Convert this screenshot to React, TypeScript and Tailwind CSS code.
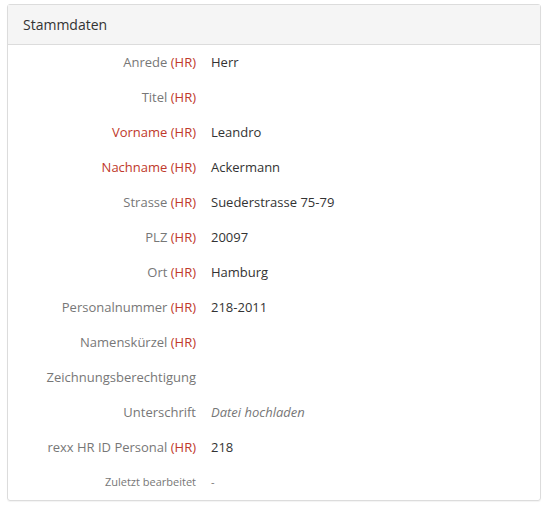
const rows: { label: string; hr?: boolean; red?: boolean; value?: string; italic?: boolean }[] = [
  { label: 'Anrede', hr: true, value: 'Herr' },
  { label: 'Titel', hr: true },
  { label: 'Vorname', hr: true, red: true, value: 'Leandro' },
  { label: 'Nachname', hr: true, red: true, value: 'Ackermann' },
  { label: 'Strasse', hr: true, value: 'Suederstrasse 75-79' },
  { label: 'PLZ', hr: true, value: '20097' },
  { label: 'Ort', hr: true, value: 'Hamburg' },
  { label: 'Personalnummer', hr: true, value: '218-2011' },
  { label: 'Namenskürzel', hr: true },
  { label: 'Zeichnungsberechtigung' },
  { label: 'Unterschrift', value: 'Datei hochladen', italic: true },
  { label: 'rexx HR ID Personal', hr: true, value: '218' },
];

const App = () => {
  return (
    <div className="w-[548px] h-[514px] bg-white pt-[4px] pl-[7px]" style={{ fontFamily: '"Open Sans", sans-serif' }}>
      <div className="w-[534px] border border-[#dcdcdc] rounded-[3px] shadow-[0_1px_1px_rgba(0,0,0,0.05)]">
        <div className="h-[40px] bg-[#f5f5f5] border-b border-[#dcdcdc] flex items-center pl-[15px] text-[14px] text-[#333]">
          Stammdaten
        </div>
        <div className="flex flex-col">
          {rows.map((r) => (
            <div key={r.label} className="h-[35px] flex items-center text-[13px]">
              <div className={`w-[188px] text-right ${r.red ? 'text-[#c0392b]' : 'text-[#777]'}`}>
                {r.label}
                {r.hr && <span className="text-[#c0392b]"> (HR)</span>}
              </div>
              <div className={`pl-[15px] ${r.italic ? 'italic text-[#777]' : 'text-[#333]'}`}>{r.value}</div>
            </div>
          ))}
          <div className="h-[35px] flex items-center text-[11px] text-[#777]">
            <div className="w-[188px] text-right">Zuletzt bearbeitet</div>
            <div className="pl-[15px]">-</div>
          </div>
        </div>
      </div>
    </div>
  );
};

export default App;
